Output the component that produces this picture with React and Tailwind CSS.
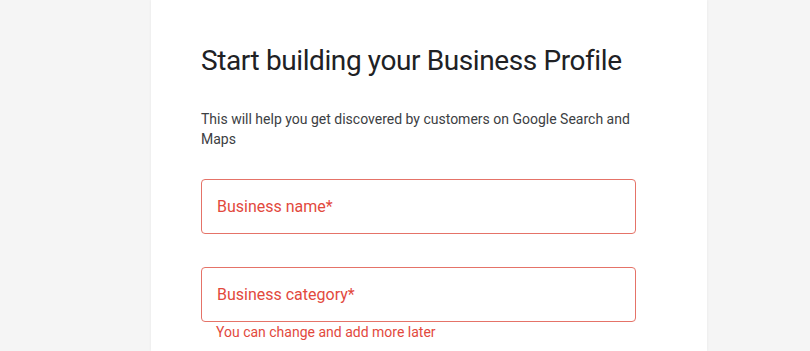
export default function App() {
  return (
    <div className="min-h-screen bg-[#f5f5f5] flex pl-[151px] font-['Roboto',sans-serif]">
      <div className="w-[556px] min-h-[351px] bg-white pl-[50px] pr-[71px] pt-[43px] shadow-[0_0_3px_rgba(0,0,0,0.06)]">
        <h1 className="text-[28px] leading-9 text-[#202124] font-normal tracking-[-0.4px]">
          Start building your Business Profile
        </h1>
        <p className="mt-[30px] text-sm leading-5 text-[#3c4043]">
          This will help you get discovered by customers on Google Search and Maps
        </p>
        <div className="mt-[30px] h-[55px] rounded border border-[#e57368] flex items-center px-[15px]">
          <span className="text-base text-[#e2493d]">Business name*</span>
        </div>
        <div className="mt-[33px] h-[55px] rounded border border-[#e57368] flex items-center px-[15px]">
          <span className="text-base text-[#e2493d]">Business category*</span>
        </div>
        <p className="px-[15px] text-sm leading-5 text-[#e2493d]">
          You can change and add more later
        </p>
      </div>
    </div>
  )
}
